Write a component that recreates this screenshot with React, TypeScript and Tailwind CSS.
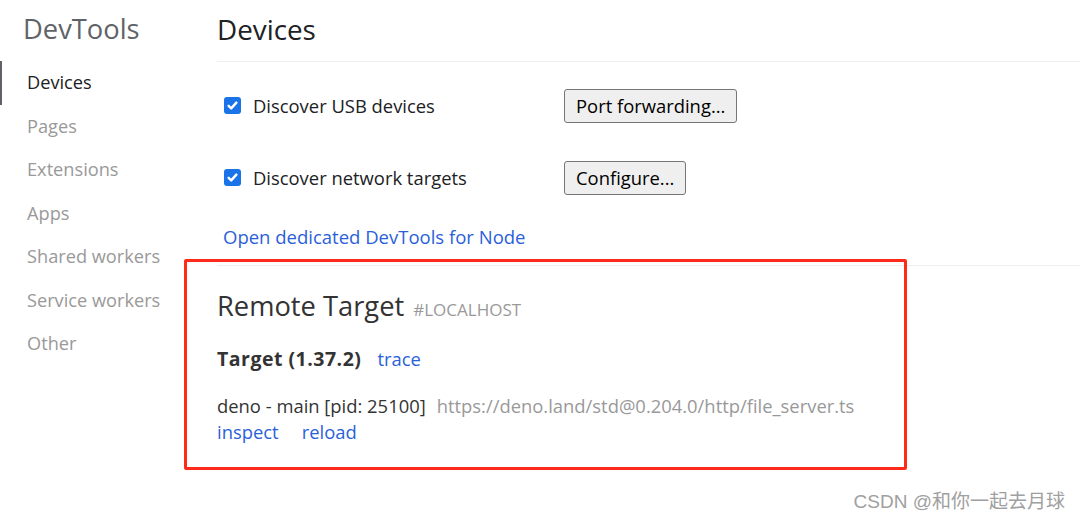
import React from "react";

const font = { fontFamily: '"Open Sans", "Noto Sans", "Noto Sans CJK SC", sans-serif' };

function Check() {
  return (
    <span className="inline-flex h-[17px] w-[17px] items-center justify-center rounded-[3px] bg-[#1a73e8]">
      <svg width="13" height="13" viewBox="0 0 13 13">
        <path d="M2.6 6.8 L5.2 9.4 L10.4 3.6" fill="none" stroke="white" strokeWidth="2.4" strokeLinecap="round" strokeLinejoin="round" />
      </svg>
    </span>
  );
}

export default function App() {
  const nav = ["Devices", "Pages", "Extensions", "Apps", "Shared workers", "Service workers", "Other"];
  return (
    <div className="relative flex h-[521px] w-[1080px] overflow-hidden bg-white" style={font}>
      <aside className="w-[217px] shrink-0">
        <div className="flex h-[61px] items-center pl-[23px] pb-[4px] text-[27.3px] leading-[36px] text-[#5f6368]">DevTools</div>
        <nav className="flex flex-col">
          {nav.map((n, i) => (
            <div
              key={n}
              className={
                i === 0
                  ? "flex h-[43.5px] items-center border-l-[2px] border-[#5f6368] pl-[25px] text-[18.2px] text-[#202124]"
                  : "flex h-[43.5px] items-center border-l-[2px] border-transparent pl-[25px] text-[18.2px] text-[#999999]"
              }
            >
              {n}
            </div>
          ))}
        </nav>
      </aside>
      <main className="flex-1">
        <div className="flex h-[62px] items-center border-b border-[#eeeeee] pb-[4px] text-[27.8px] leading-[36px] text-[#202124]">Devices</div>
        <div className="mt-[27px] flex h-[34px] items-center text-[18.4px] text-[#202124]">
          <div className="flex w-[347px] items-center pl-[7px]">
            <Check />
            <span className="ml-[12px]">Discover USB devices</span>
          </div>
          <button className="h-[34px] rounded-[3px] border border-[#767676] bg-[#efefef] px-[11px] text-[18.4px] text-[#000000]">Port forwarding...</button>
        </div>
        <div className="mt-[38px] flex h-[34px] items-center text-[18.4px] text-[#202124]">
          <div className="flex w-[347px] items-center pl-[7px]">
            <Check />
            <span className="ml-[12px]">Discover network targets</span>
          </div>
          <button className="h-[34px] rounded-[3px] border border-[#767676] bg-[#efefef] px-[11px] text-[18.4px] text-[#000000]">Configure...</button>
        </div>
        <div className="mt-[30px] h-[24px] pl-[6px] text-[18.5px] leading-[24px] text-[#2b5fd9]">Open dedicated DevTools for Node</div>
        <div className="mt-[16px] border-b border-[#eeeeee]" />
        <div className="mt-[22px] flex h-[36px] items-baseline">
          <span className="text-[27.3px] leading-[36px] text-[#333333]">Remote Target</span>
          <span className="ml-[9px] text-[17px] text-[#999999]">#LOCALHOST</span>
        </div>
        <div className="mt-[23px] flex h-[24px] items-baseline text-[18.4px] leading-[24px]">
          <span className="text-[19.5px] font-bold tracking-[0.5px] text-[#333333]">Target (1.37.2)</span>
          <span className="ml-[16px] text-[#2b5fd9]">trace</span>
        </div>
        <div className="mt-[22px] flex h-[26px] items-baseline text-[18.4px] leading-[26px]">
          <span className="text-[#333333]">deno - main [pid: 25100]</span>
          <span className="ml-[11px] text-[#999999]">https://deno.land/std@0.204.0/http/file_server.ts</span>
        </div>
        <div className="flex h-[26px] items-baseline text-[18.4px] leading-[26px] text-[#2b5fd9]">
          <span>inspect</span>
          <span className="ml-[23px]">reload</span>
        </div>
      </main>
      <div className="pointer-events-none absolute left-[184px] top-[259px] h-[211px] w-[723px] rounded-[2px] border-[3px] border-[#ff2a1a]" />
      <div className="absolute right-[15px] top-[488px] text-[19px] text-[#a0a0a0]" style={{ fontFamily: '"Liberation Sans", "Noto Sans CJK SC", sans-serif' }}>
        CSDN @和你一起去月球
      </div>
    </div>
  );
}
